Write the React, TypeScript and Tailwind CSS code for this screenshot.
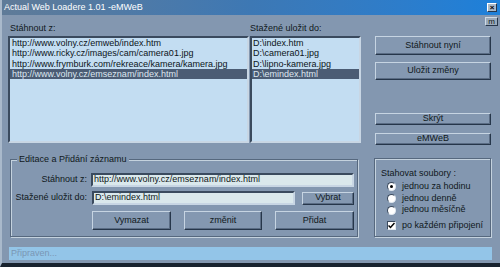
import React from "react";

const urls = [
  "http://www.volny.cz/emweb/index.htm",
  "http://www.ricky.cz/images/cam/camera01.jpg",
  "http://www.frymburk.com/rekreace/kamera/kamera.jpg",
  "http://www.volny.cz/emseznam/index.html",
];

const files = ["D:\\index.htm", "D:\\camera01.jpg", "D:\\lipno-kamera.jpg", "D:\\emindex.html"];

const raised =
  "border border-t-[#c6d4e2] border-l-[#c6d4e2] border-r-[#26364a] border-b-[#26364a] shadow-[inset_-1px_-1px_0_#5a6c84] bg-[#8498b1]";
const sunken =
  "border-2 border-t-[#3a4a5e] border-l-[#3a4a5e] border-r-[#c8d6e4] border-b-[#c8d6e4]";
const etched =
  "border border-[#56687e] shadow-[inset_1px_1px_0_#c4d2de,1px_1px_0_#c4d2de]";

function Button({ label, className }: { label: string; className: string }) {
  return (
    <div className={`${raised} flex items-center justify-center text-[#101820] ${className}`}>
      {label}
    </div>
  );
}

function ListBox({ items, className, pad }: { items: string[]; className: string; pad: string }) {
  return (
    <div className={`${sunken} bg-[#c3ddf2] h-[107px] overflow-hidden ${className}`}>
      {items.map((it, i) => (
        <div
          key={it}
          className={`h-[10.3px] leading-[10.3px] whitespace-nowrap ${pad} ${
            i === items.length - 1 ? "bg-[#4b5c74] text-[#dde7f0]" : "text-[#0c1420]"
          }`}
        >
          {it}
        </div>
      ))}
    </div>
  );
}

function Radio({ checked, label }: { checked?: boolean; label: string }) {
  return (
    <div className="flex items-center h-[11.7px]">
      <span className="w-[9px] h-[9px] rounded-full bg-white border border-t-[#3a4a5e] border-l-[#3a4a5e] border-r-[#e0e8f0] border-b-[#e0e8f0] flex items-center justify-center">
        {checked && <span className="w-[3px] h-[3px] rounded-full bg-black" />}
      </span>
      <span className="ml-[6px]">{label}</span>
    </div>
  );
}

export default function App() {
  return (
    <div
      className="w-[500px] h-[267px] bg-[#8397b0] flex flex-col text-[9px] text-[#101820] border-l-[2px] border-l-[#a9b9cb] border-b-[4px] border-b-[#18222e] overflow-hidden"
      style={{ fontFamily: '"Liberation Sans", Arial, sans-serif' }}
    >
      <div className="h-[15px] bg-gradient-to-r from-[#5f7b98] via-[#3d78b4] to-[#1c80da] flex items-center pl-[2px] pr-[3px] text-white">
        <span>Actual Web Loadere 1.01 -eMWeB</span>
        <span className="ml-auto w-[10px] h-[9px] bg-[#a8b8c8] border border-t-white border-l-white border-r-[#26364a] border-b-[#26364a] flex items-center justify-center text-[8px] leading-none text-black font-bold">
          ×
        </span>
      </div>

      <div className="relative flex-1 flex flex-col pl-[6px]">
        <span className="absolute top-[2px] right-[2px] w-[13px] h-[9px] bg-[#9aaabb] border border-t-[#d0dce6] border-l-[#d0dce6] border-r-[#26364a] border-b-[#26364a] flex items-center justify-center text-[8px] leading-none">
          m
        </span>

        <div className="flex pt-[7px]">
          <div className="w-[241px] flex flex-col">
            <div className="h-[14px] flex items-center pl-[2px]">Stáhnout z:</div>
            <ListBox items={urls} className="w-[241px]" pad="pl-[2px]" />
          </div>
          <div className="w-[111px] ml-[1px] flex flex-col">
            <div className="h-[14px] flex items-center">Stažené uložit do:</div>
            <ListBox items={files} className="w-[111px]" pad="pl-[1px]" />
          </div>
          <div className="w-[116px] ml-[14px] pt-[14px] flex flex-col">
            <Button label="Stáhnout nyní" className="h-[19px]" />
            <Button label="Uložit změny" className="h-[18px] mt-[7px]" />
            <Button label="Skrýt" className="h-[12px] mt-[33px]" />
            <Button label="eMWeB" className="h-[12px] mt-[8px]" />
          </div>
        </div>

        <div className="flex mt-[14px]">
          <div className={`relative ${etched} w-[348px] h-[78px] ml-[2px] pt-[13px] pl-[1px]`}>
            <span className="absolute -top-[6px] left-[6px] px-[2px] bg-[#8397b0] leading-[10px]">
              Editace a Přidání záznamu
            </span>
            <div className="flex items-center h-[14px]">
              <span className="w-[75px] text-right">Stáhnout z:</span>
              <div className={`${sunken} ml-[4px] w-[263px] h-[14px] bg-[#dae8ec] flex items-center pl-[1px] whitespace-nowrap`}>
                http://www.volny.cz/emseznam/index.html
              </div>
            </div>
            <div className="flex items-center h-[14px] mt-[4px]">
              <span className="w-[75px] text-right">Stažené uložit do:</span>
              <div className={`${sunken} ml-[5px] w-[203px] h-[14px] bg-[#dae8ec] flex items-center pl-[1px]`}>
                D:\emindex.html
              </div>
              <Button label="Vybrat" className="ml-[7px] w-[52px] h-[13px]" />
            </div>
            <div className="flex gap-[13px] ml-[80px] mt-[6px]">
              <Button label="Vymazat" className="w-[79px] h-[19px]" />
              <Button label="změnit" className="w-[78px] h-[19px]" />
              <Button label="Přidat" className="w-[79px] h-[19px]" />
            </div>
          </div>

          <div className={`${etched} w-[117px] h-[79px] ml-[16px] -mt-[1px] pl-[6px] pt-[9px]`}>
            <div className="h-[10px] leading-[10px]">Stahovat soubory :</div>
            <div className="pl-[6px] mt-[3px]">
              <Radio checked label="jednou za hodinu" />
              <Radio label="jednou denně" />
              <Radio label="jednou měsíčně" />
              <div className="flex items-center h-[11px] mt-[4px]">
                <span className="w-[9px] h-[9px] bg-white border border-t-[#3a4a5e] border-l-[#3a4a5e] border-r-[#e0e8f0] border-b-[#e0e8f0] flex items-center justify-center">
                  <svg width="7" height="7" viewBox="0 0 7 7">
                    <path d="M0.5 3.5 L2.5 5.5 L6.5 1" stroke="black" strokeWidth="1.5" fill="none" />
                  </svg>
                </span>
                <span className="ml-[6px]">po každém připojení</span>
              </div>
            </div>
          </div>
        </div>

        <div className="mt-[10px] ml-[1px] w-[483px] h-[13px] bg-[#93c5e8] flex items-center pl-[2px] text-[#7a96b4]">
          Připraven...
        </div>
      </div>
    </div>
  );
}
